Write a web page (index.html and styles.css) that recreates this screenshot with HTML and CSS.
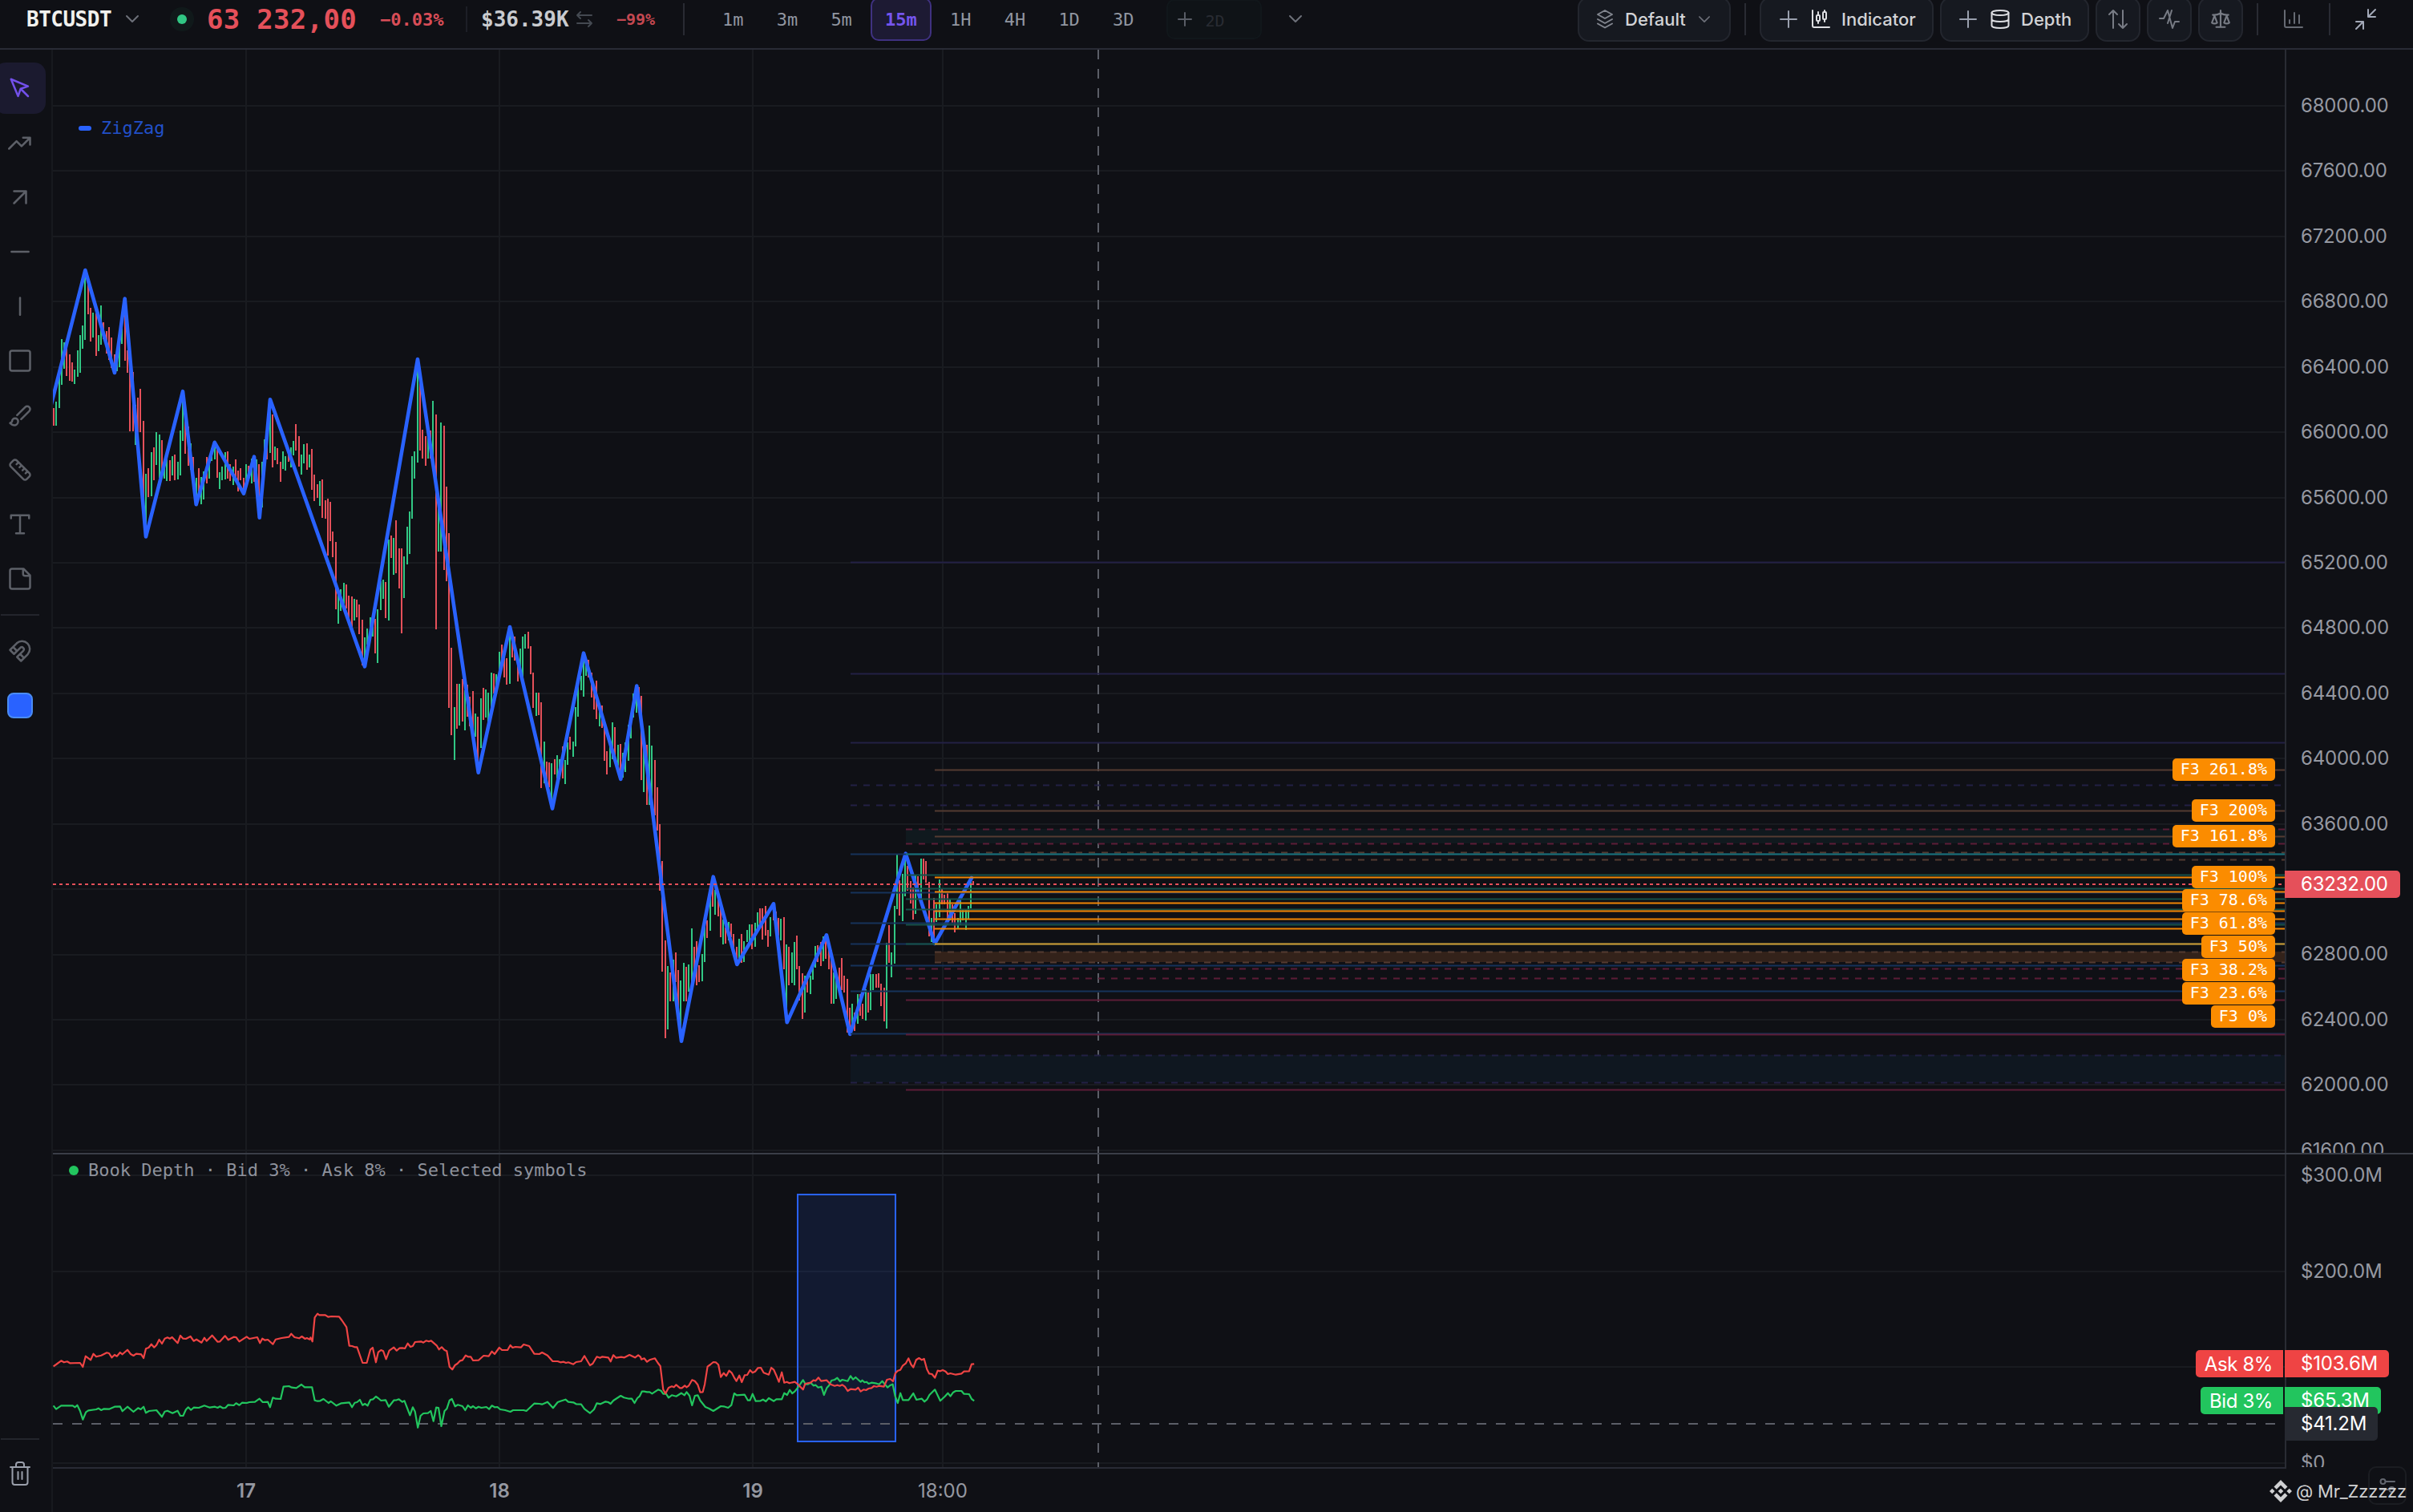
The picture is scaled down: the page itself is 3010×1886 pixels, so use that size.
FILE: index.html
```html
<!DOCTYPE html>
<html lang="en">
  <head>
    <meta charset="UTF-8" />
    <meta name="viewport" content="width=device-width, initial-scale=1.0" />
    <title>BTCUSDT</title>
    <link rel="stylesheet" href="styles.css">
  </head>
  <body>
    <header class="topbar">
      <div class="symbol">BTCUSDT</div>
      <svg class="icon chevron symbol-chevron" viewBox="0 0 16 10"><path d="M1 1l7 7 7-7" /></svg>
      <span class="live-dot"></span>
      <span class="price">63 232,00</span>
      <span class="change">−0.03%</span>
      <span class="divider short"></span>
      <span class="volume">$36.39K</span>
      <svg class="icon swap" viewBox="0 0 20 20"><path d="M19 5H1M5 1L1 5l4 4M1 15h18M15 11l4 4-4 4" /></svg>
      <span class="volume-change">−99%</span>
      <span class="divider"></span>

      <nav class="timeframes">
        <button class="tf">1m</button>
        <button class="tf">3m</button>
        <button class="tf">5m</button>
        <button class="tf active">15m</button>
        <button class="tf">1H</button>
        <button class="tf">4H</button>
        <button class="tf">1D</button>
        <button class="tf">3D</button>
      </nav>
      <div class="tf-add">
        <svg class="icon" viewBox="0 0 16 16"><path d="M8 0v16M0 8h16" /></svg>
        <span>2D</span>
      </div>
      <svg class="icon chevron tf-more" viewBox="0 0 16 10"><path d="M1 1l7 7 7-7" /></svg>

      <div class="actions">
        <button class="action layout">
          <svg class="icon" viewBox="0 0 24 24"><path d="M12 1l9 5-9 5-9-5z M3 12l9 5 9-5M3 17.500l9 5 9-5" /></svg>
          <span>Default</span>
          <svg class="icon chevron" viewBox="0 0 16 10"><path d="M1 1l7 7 7-7" /></svg>
        </button>
        <span class="divider"></span>
        <button class="action indicator">
          <svg class="icon plus" viewBox="0 0 20 20"><path d="M10 0v20M0 10h20" /></svg>
          <svg class="icon bright" viewBox="0 0 24 24"><path d="M2 1v19a2 2 0 0 0 2 2h19M9 3v4M9 14v3M17 1v2M17 12v3" /><rect x="7" y="7" width="4" height="7" rx="1" /><rect x="15" y="3" width="4" height="9" rx="1" /></svg>
          <span>Indicator</span>
        </button>
        <button class="action depth">
          <svg class="icon plus" viewBox="0 0 20 20"><path d="M10 0v20M0 10h20" /></svg>
          <svg class="icon bright" viewBox="0 0 24 24"><ellipse cx="12" cy="4" rx="10.500" ry="3" /><path d="M1.500 4v16c0 1.700 4.700 3 10.500 3s10.500-1.300 10.500-3V4M1.500 12c0 1.700 4.700 3 10.500 3s10.500-1.300 10.500-3" /></svg>
          <span>Depth</span>
        </button>
        <button class="action square"><svg class="icon" viewBox="0 0 26 26"><path d="M7 24V2M2 7l5-5 5 5M19 2v22M14 19l5 5 5-5" /></svg></button>
        <button class="action square"><svg class="icon" viewBox="0 0 26 26"><path d="M1 12h5l5-10 6 22 3-8h5M16 2l-5 16" /></svg></button>
        <button class="action square"><svg class="icon" viewBox="0 0 24 24"><path d="M16 16l3-8 3 8c-.87.65-1.920 1-3 1s-2.130-.35-3-1ZM2 16l3-8 3 8c-.87.65-1.920 1-3 1s-2.130-.35-3-1ZM7 21h10M12 2v19M3 7h2c2 0 5-1 7-2 2 1 5 2 7 2h2" /></svg></button>
        <span class="divider"></span>
        <svg class="icon bars" viewBox="0 0 24 24"><path d="M1 1v19a2 2 0 0 0 2 2h20M7 17v-4M13 17V4M19 17V7" /></svg>
        <span class="divider"></span>
        <svg class="icon collapse" viewBox="0 0 26 26"><path d="M1 16h9v9M25 10h-9V1M16 10l9-9M1 25l9-9" /></svg>
      </div>
    </header>

    <main class="workspace">
      <aside class="tools">
        <button class="tool active"><svg class="icon" viewBox="0 0 24 24"><path d="M3 3l7.070 16.970 2.510-7.390 7.390-2.510L3 3zM13 13l7 7" /></svg></button>
        <button class="tool"><svg class="icon" viewBox="0 0 24 24"><path d="M22 7l-8.500 8.500-5-5L1 18M15 7h7v7" /></svg></button>
        <button class="tool"><svg class="icon" viewBox="0 0 24 24"><path d="M6 18L18 6M6 6h12v12" /></svg></button>
        <button class="tool"><svg class="icon" viewBox="0 0 24 24"><path d="M3.500 12h17" /></svg></button>
        <button class="tool"><svg class="icon" viewBox="0 0 24 24"><path d="M12 3.500v17" /></svg></button>
        <button class="tool"><svg class="icon" viewBox="0 0 24 24"><rect x="2" y="2" width="20" height="20" rx="2" /></svg></button>
        <button class="tool"><svg class="icon" viewBox="0 0 24 24"><path d="M9.060 11.900l8.070-8.060a2.850 2.850 0 1 1 4.030 4.030l-8.060 8.080M7.070 14.940c-1.660 0-3 1.350-3 3.020 0 1.330-2.500 1.520-2 2.020 1.080 1.100 2.490 2.020 4 2.020 2.200 0 4-1.800 4-4.040a3.010 3.010 0 0 0-3-3.020z" /></svg></button>
        <button class="tool"><svg class="icon" viewBox="0 0 24 24"><path d="M21.300 15.300a2.400 2.400 0 0 1 0 3.400l-2.600 2.600a2.400 2.400 0 0 1-3.400 0L2.700 8.700a2.410 2.410 0 0 1 0-3.400l2.600-2.600a2.410 2.410 0 0 1 3.400 0ZM14.500 12.500l2-2M11.500 9.500l2-2M8.500 6.500l2-2M17.500 15.500l2-2" /></svg></button>
        <button class="tool"><svg class="icon" viewBox="0 0 24 24"><path d="M3 6V3h18v3M8 21h8M12 3v18" /></svg></button>
        <button class="tool"><svg class="icon" viewBox="0 0 24 24"><path d="M15.500 2H4a2 2 0 0 0-2 2v16a2 2 0 0 0 2 2h16a2 2 0 0 0 2-2V8.500ZM15 2v5a2 2 0 0 0 2 2h5" /></svg></button>
        <hr class="tool-rule">
        <button class="tool"><svg class="icon" viewBox="0 0 24 24"><path d="M6 15l-4-4 6.750-6.770a7.790 7.790 0 0 1 11 11L13 22l-4-4 6.390-6.360a2.140 2.140 0 0 0-3-3L6 15M5 8l4 4M12 15l4 4" /></svg></button>
        <button class="tool"><span class="swatch"></span></button>
        <div class="tools-bottom">
          <hr class="tool-rule">
          <button class="tool trash"><svg class="icon" viewBox="0 0 26 30"><path d="M1 7h24M3.500 7v19a3 3 0 0 0 3 3h13a3 3 0 0 0 3-3V7M8 7V4a3 3 0 0 1 3-3h4a3 3 0 0 1 3 3v3M10.500 13v9M15.500 13v9" /></svg></button>
        </div>
      </aside>

      <section class="charts">
        <div class="pane price-pane">
          <div class="plot">
            <svg id="price-chart" viewBox="66 62 2784 1376"></svg>
            <div class="legend zigzag"><i></i>ZigZag</div>
            <div id="fib-tags"></div>
          </div>
          <div class="axis">
            <div class="scale price-scale">
              <span>68000.00</span>
              <span>67600.00</span>
              <span>67200.00</span>
              <span>66800.00</span>
              <span>66400.00</span>
              <span>66000.00</span>
              <span>65600.00</span>
              <span>65200.00</span>
              <span>64800.00</span>
              <span>64400.00</span>
              <span>64000.00</span>
              <span>63600.00</span>
              <span></span>
              <span>62800.00</span>
              <span>62400.00</span>
              <span>62000.00</span>
              <span>61600.00</span>
            </div>
            <div class="axis-tag last-price">63232.00</div>
          </div>
        </div>

        <div class="pane depth-pane">
          <div class="plot">
            <svg id="depth-chart" viewBox="66 1440 2784 390"></svg>
            <div class="legend book"><i></i>Book Depth · Bid 3% · Ask 8% · Selected symbols</div>
            <div class="series-tag ask">Ask 8%</div>
            <div class="series-tag bid">Bid 3%</div>
          </div>
          <div class="axis">
            <div class="scale depth-scale">
              <span>$300.0M</span>
              <span>$200.0M</span>
              <span></span>
              <span>$0</span>
            </div>
            <div class="axis-tag ask">$103.6M</div>
            <div class="axis-tag bid">$65.3M</div>
            <div class="axis-tag cursor">$41.2M</div>
          </div>
        </div>

        <footer class="time-axis">
          <b class="day">17</b>
          <b class="day">18</b>
          <b class="day">19</b>
          <span class="hour">18:00</span>
        </footer>
        <button class="settings"><svg class="icon" viewBox="0 0 18 18"><circle cx="3.500" cy="4" r="3" /><path d="M7 4h11M0 14h11" /><circle cx="14.500" cy="14" r="3" /></svg></button>
        <div class="watermark">
          <svg viewBox="0 0 28 28"><path d="M14 0l8.500 8.500-3.300 3.300L14 6.600l-5.200 5.200-3.300-3.300zM14 28l8.500-8.500-3.300-3.300L14 21.400l-5.200-5.200-3.300 3.300zM14 10.700l3.300 3.300-3.300 3.300-3.300-3.300zM3.300 10.700L6.600 14l-3.300 3.300L0 14zM24.700 10.700L28 14l-3.300 3.300-3.300-3.300z" /></svg>
          <span>@ Mr_Zzzzzz</span>
        </div>
      </section>
    </main>

    <script src="chart.js"></script>
  </body>
</html>
```

FILE: styles.css
```css
* {
  box-sizing: border-box;
}
body {
  margin: 0;
  width: 3010px;
  height: 1886px;
  overflow: hidden;
  display: flex;
  flex-direction: column;
  background-color: #0f1015;
  color: #9598a1;
  font-family: Inter, "Liberation Sans", sans-serif;
  font-size: 24px;
}
button {
  border: none;
  background: none;
  padding: 0;
  margin: 0;
  color: inherit;
  font: inherit;
}
.icon {
  fill: none;
  stroke: currentColor;
  stroke-width: 2;
  stroke-linecap: round;
  stroke-linejoin: round;
  overflow: visible;
  flex: none;
}
.chevron {
  width: 16px;
  height: 10px;
  color: #6d7079;
}

/* Top bar */
.topbar {
  flex: none;
  height: 62px;
  padding: 0 46px 12px 33px;
  border-bottom: 2px solid #292b35;
  display: flex;
  align-items: center;
  white-space: nowrap;
  font-family: "DejaVu Sans Mono", monospace;
}
.symbol {
  width: 108px;
  font-size: 26px;
  font-weight: 700;
  letter-spacing: -0.5px;
  color: #f1f1ee;
}
.symbol-chevron {
  margin-left: 16px;
}
.live-dot {
  width: 12px;
  height: 12px;
  margin-left: 48px;
  border-radius: 50%;
  background-color: #31c784;
  box-shadow: 0 0 0 9px rgba(49, 199, 132, 0.05);
}
.price {
  width: 188px;
  margin-left: 25px;
  font-size: 34px;
  font-weight: 700;
  letter-spacing: 0.3px;
  color: #e5505a;
}
.change {
  width: 80px;
  margin-left: 28px;
  font-size: 22px;
  font-weight: 700;
  color: #d84d57;
}
.divider {
  flex: none;
  width: 2px;
  height: 40px;
  background-color: #292b33;
}
.divider.short {
  height: 32px;
  margin-left: 27px;
  background-color: #1d1f26;
}
.volume {
  width: 110px;
  margin-left: 17px;
  font-size: 26px;
  font-weight: 700;
  color: #c9cbcf;
}
.swap {
  width: 20px;
  height: 20px;
  margin-left: 9px;
  color: #444951;
}
.volume-change {
  width: 48px;
  margin-left: 30px;
  font-size: 20px;
  font-weight: 700;
  color: #c44851;
}
.volume-change + .divider {
  margin-left: 35px;
}
.timeframes {
  display: flex;
  gap: 5.200px;
  margin-left: 29px;
}
.tf {
  height: 54px;
  padding: 0 16px;
  border: 2px solid transparent;
  border-radius: 10px;
  font-size: 22px;
  color: #9196a1;
}
.tf.active {
  border-color: #3f3180;
  background-color: #1d1a33;
  color: #7555ee;
  font-weight: 700;
}
.tf-add {
  width: 119px;
  height: 50px;
  margin-left: 22px;
  padding-left: 13px;
  border: 2px solid #11171b;
  border-radius: 10px;
  background-color: #0f1317;
  display: flex;
  align-items: center;
  gap: 18px;
  font-size: 20px;
  color: #292c33;
}
.tf-add .icon {
  width: 16px;
  height: 16px;
  color: #595d66;
}
.tf-add span {
  padding-top: 3px;
}
.tf-more {
  margin-left: 34px;
}
.actions {
  margin-left: auto;
  display: flex;
  align-items: center;
  font: 500 22px Inter, sans-serif;
  color: #d2d3d6;
}
.action {
  height: 56px;
  border: 2px solid #23262e;
  border-radius: 14px;
  background-color: #161920;
  display: flex;
  align-items: center;
}
.action .icon {
  width: 24px;
  height: 24px;
  color: #82868f;
}
.action .plus {
  width: 20px;
  height: 20px;
  color: #9aa0ae;
}
.action .bright {
  color: #dddee2;
}
.action .chevron {
  width: 14px;
  height: 9px;
  color: #6d7079;
}
.layout {
  width: 191px;
  padding-left: 20px;
}
.layout span {
  width: 78px;
  margin: 0 14px 0 13px;
  text-align: left;
}
.actions > .divider {
  margin-left: 17px;
}
.indicator {
  width: 217px;
  margin-left: 17px;
  padding-left: 24px;
}
.depth {
  width: 186px;
  margin-left: 8px;
  padding-left: 23px;
}
.plus + .icon {
  margin: 0 14px 0 18px;
}
.square {
  width: 56px;
  margin-left: 8px;
  justify-content: center;
}
.square .icon {
  width: 26px;
  height: 26px;
  color: #777b84;
}
.bars {
  width: 24px;
  height: 24px;
  margin: 0 15px 0 32px;
  color: #666a73;
}
.collapse {
  width: 26px;
  height: 26px;
  margin-left: 31px;
  color: #a3a9b8;
}

/* Drawing tools */
.workspace {
  flex: 1;
  display: flex;
  min-height: 0;
}
.tools {
  flex: none;
  width: 66px;
  padding-top: 14px;
  border-right: 2px solid #17191e;
  display: flex;
  flex-direction: column;
}
.tool {
  flex: none;
  width: 64px;
  height: 64px;
  margin: 2px 0 2px -7px;
  border-radius: 14px;
  display: flex;
  align-items: center;
  justify-content: center;
  color: #5d6068;
}
.tool .icon {
  width: 30px;
  height: 30px;
}
.tool.active {
  background-color: #1b1a2f;
  color: #7350ea;
}
.tool-rule {
  width: 48px;
  height: 2px;
  margin: 10px 0 10px 1px;
  border: none;
  background-color: #23252c;
}
.swatch {
  width: 32px;
  height: 32px;
  border: 2px solid #4a8cf2;
  border-radius: 8px;
  background-color: #2962ff;
}
.tools-bottom {
  margin-top: auto;
  padding-bottom: 14px;
}
.trash {
  color: #9a9fab;
}
.trash .icon {
  width: 26px;
}

/* Panes */
.charts {
  position: relative;
  flex: 1;
  display: flex;
  flex-direction: column;
}
.pane {
  display: grid;
  grid-template-columns: 2784px 160px;
}
.price-pane {
  height: 1378px;
  border-bottom: 2px solid #3a3e48;
}
.depth-pane {
  height: 392px;
}
.depth-pane .plot {
  border-bottom: 2px solid #292b35;
}
.plot,
.axis {
  position: relative;
}
.plot svg {
  display: block;
  width: 2784px;
}
.axis {
  border-left: 2px solid #292b33;
  min-height: 0;
  letter-spacing: -0.2px;
}
.scale {
  height: 100%;
  overflow: hidden;
  padding-left: 18px;
}
.scale span {
  display: block;
}
.price-scale {
  padding-top: 29px;
}
.price-scale span {
  height: 81.430px;
  line-height: 81.430px;
}
.depth-scale {
  height: 390px;
}
.depth-scale span {
  height: 119.670px;
  line-height: 119.670px;
}
.depth-scale span:first-child {
  margin-top: -34px;
}
.axis-tag,
.series-tag {
  position: absolute;
  height: 34px;
  line-height: 34px;
  color: #fff;
}
.axis-tag {
  left: -2px;
  padding-left: 20px;
  border-radius: 0 5px 5px 0;
}
.series-tag {
  right: 2px;
  padding: 1px 13px 0 11px;
  border-radius: 5px 0 0 5px;
  letter-spacing: -0.4px;
}
.last-price {
  top: 1024px;
  width: 144px;
  background-color: #e5505a;
}
.ask {
  top: 244px;
  background-color: #ef4444;
}
.bid {
  top: 290px;
  background-color: #22c55e;
}
.axis-tag.ask {
  width: 130px;
}
.axis-tag.bid {
  width: 120px;
}
.axis-tag.cursor {
  top: 315px;
  width: 116px;
  height: 42px;
  line-height: 42px;
  background-color: #262931;
}
.legend {
  position: absolute;
  display: flex;
  align-items: center;
  font-family: "DejaVu Sans Mono", monospace;
  font-size: 22px;
  line-height: 26px;
  white-space: pre;
}
.zigzag {
  left: 32px;
  top: 85px;
  gap: 12px;
  color: #2250c8;
}
.zigzag i {
  width: 16px;
  height: 6px;
  border-radius: 3px;
  background-color: #2962ff;
}
.book {
  left: 20px;
  top: 7px;
  gap: 12px;
  color: #8e929c;
}
.book i {
  width: 12px;
  height: 12px;
  border-radius: 50%;
  background-color: #22c55e;
}
.fib-tag {
  position: absolute;
  right: 12px;
  height: 28px;
  padding: 0 10px;
  border-radius: 5px;
  background-color: #fb8c00;
  color: #fff;
  font: 20px/27px "DejaVu Sans Mono", monospace;
  white-space: pre;
}
.time-axis {
  display: flex;
  align-items: center;
  height: 54px;
  padding-left: 83px;
}
.day {
  width: 316px;
  text-align: center;
  font-weight: 600;
}
.hour {
  width: 160px;
  margin-left: -1px;
  text-align: center;
}
.settings {
  position: absolute;
  right: 8px;
  bottom: 9px;
  width: 48px;
  height: 48px;
  border: 2px solid #1b1d22;
  border-radius: 10px;
  display: flex;
  align-items: center;
  justify-content: center;
  color: #62666f;
}
.settings .icon {
  width: 18px;
  height: 18px;
}
.watermark {
  position: absolute;
  right: 8px;
  bottom: 12px;
  display: flex;
  align-items: center;
  gap: 5px;
  font-size: 22px;
  letter-spacing: -0.2px;
  color: #cfd0d2;
}
.watermark svg {
  width: 28px;
  height: 28px;
  fill: currentColor;
}

/* Chart strokes */
.grid {
  stroke: #191b20;
  stroke-width: 2;
}
.crosshair {
  stroke: #5b5e67;
  stroke-width: 2;
  stroke-dasharray: 12 12;
}
.up {
  fill: #31c784;
}
.down {
  fill: #e5505a;
}
.zigzag-line {
  fill: none;
  stroke: #2962ff;
  stroke-width: 4.600;
  stroke-linejoin: round;
  stroke-linecap: round;
}
.last-line {
  stroke: #e5505a;
  stroke-width: 2;
  stroke-dasharray: 4 4;
}
.fib {
  stroke-width: 2;
}
.fib.dashed {
  stroke-dasharray: 8 8;
}
.purple {
  stroke: #232045;
}
.blue {
  stroke: #16325a;
}
.maroon {
  stroke: #5c1c37;
}
.teal {
  stroke: #165049;
}
.cyan {
  stroke: #187176;
}
.brown {
  stroke: #543b31;
}
.orange {
  stroke: #ef8405;
}
.gold {
  stroke: #d1962a;
}
.ask-line,
.bid-line {
  fill: none;
  stroke-width: 2.200;
  stroke-linejoin: round;
}
.ask-line {
  stroke: #ef4444;
}
.bid-line {
  stroke: #22c55e;
}
.selection {
  fill: rgba(41, 98, 255, 0.12);
  stroke: #2962ff;
  stroke-width: 2;
}
```

FILE: chart.js
```js
const NS = "http://www.w3.org/2000/svg";
const priceChart = document.getElementById("price-chart");
const depthChart = document.getElementById("depth-chart");

function draw(svg, tag, cls, attrs) {
  const el = document.createElementNS(NS, tag);
  el.setAttribute("class", cls);
  for (const key in attrs) el.setAttribute(key, attrs[key]);
  svg.appendChild(el);
}

function line(svg, cls, x1, y1, x2, y2) {
  draw(svg, "line", cls, { x1, y1, x2, y2 });
}

// Grid
for (let i = 0; i < 17; i++) {
  const y = Math.round(132 + i * 81.43);
  line(priceChart, "grid", 66, y, 2850, y);
}
[1466, 1586, 1705, 1825].forEach((y) => line(depthChart, "grid", 66, y, 2850, y));
[307, 623, 939, 1176].forEach((x) => {
  line(priceChart, "grid", x, 62, x, 1438);
  line(depthChart, "grid", x, 1440, x, 1830);
});

line(priceChart, "crosshair", 1370, 62, 1370, 1438);

// 15m bars: direction, high, low. Each block has its own origin and scale.
const blocks = [
  {
    top: 300,
    scale: 2.8,
    bars: `d585,647 u563,647 u473,585 u344,504 u356,448 d370,473 d398,490 d426,493 u451,501 u384,476
      u330,462 u297,378 u110,347 d135,258 d235,353 u252,339 d255,403 u330,386 u227,364 d286,344
      d316,395 d302,417 d339,445 d398,460 u420,456 u360,442 u300,361 d205,420 d384,462 d420,666
      d460,666 u574,714 d549,668 d518,669 d630,960 u815,1030 d795,896 u739,893 d722,837 u669,784
      u678,830 d697,815 u780,829 u765,840 d767,840 u753,820 d748,837 u773,834 u664,820 u530,700
      d580,745 d650,787 u708,800 d756,868 u829,920 d795,890 u826,921 u806,904 d756,848 u760,832
      u725,770 u710,764 d718,829 u809,868 u790,837 u739,834 d736,832 d780,840 u790,854 d764,835
      d804,876 d795,837 d829,885 u781,845 d787,830 u762,848 d755,843 u764,850 d781,965 u773,932
      u694,808 d640,764 u560,742 d608,792 u720,767 d725,781 d773,843 u736,798 u753,804 d740,773
      u722,792 u700,750 d641,734 d683,790 u748,818 u711,778 d708,801 u748,792 d728,871 d818,910
      d851,899 u840,927 d834,969 d907,972 d902,1100 d913,1050 d1016,1106 d1053,1288 u1235,1338 u1218,1294
      u1196,1270 d1201,1285 d1240,1335 d1243,1350 u1252,1327 d1254,1316 d1271,1375 d1324,1484 u1386,1485 u1355,1410
      u1316,1365 u1330,1383 d1322,1442 u1288,1476 u1190,1291 u1184,1252 d1193,1319 u1044,1327 d1030,1109 u1039,1168
      d977,1162 d1075,1215 d1075,1372 u1103,1249 u1000,1131 u946,1095 u753,972 u736,832 u415,776 d480,734
      d661,762 d683,787 u690,764 d664,762 u560,770 d608,1358 u920,1086 u636,1086 d647,1150 d860,1190`,
  },
  {
    top: 420,
    scale: 2.45,
    bars: `d600,1134 d951,1218 u1132,1294 d1061,1198 u1061,1188 d1046,1176 u1080,1203 d1063,1161 d1100,1190 d1083,1215
      u1151,1223 d1161,1325 u1105,1257 d1073,1171 u1078,1164 u1088,1180 u1027,1140 d1029,1090 u1031,1093 u963,1040
      d941,1010 d975,1041 d982,1063 u890,1061 d915,980 d916,990 d985,1053 u953,1030 u916,1050 u909,953
      d902,953 d946,1031 d1027,1134 u1088,1159 d1088,1156 d1117,1379 u1237,1365 d1298,1370 d1301,1377 u1303,1440
      d1291,1338 u1279,1350 u1291,1352 d1252,1350 u1294,1367 u1240,1308 d1223,1262 u1237,1284 u1132,1252 u1063,1161
      u1036,1080 u970,1100 u995,1036 d987,1040 d1027,1102 d1075,1139 d1051,1169 u1130,1191 d1127,1196 d1190,1296
      d1267,1338 u1240,1316 u1178,1291 d1193,1290 u1247,1310 d1245,1350 u1272,1347 u1240,1330 u1186,1296 u1165,1227
      u1090,1164 u1070,1149 d1071,1150 d1098,1355 u1210,1392 d1247,1431 u1188,1431 u1249,1409`,
  },
  {
    top: 880,
    scale: 3,
    bars: `d204,410 d306,468 d444,693 d582,996 d879,1245 u975,1212 d1000,1107 u951,1107 d924,1035 d990,1150
      u1029,1240 u963,1107 d978,1107 u969,1071 u834,1040 d903,990 d882,1047 d972,1035 u930,1032 u800,960
      d804,870 u700,843 d650,753 u690,783 d700,789 d760,867 u800,894 d830,891 u810,880 d816,867
      d855,930 d903,965 u873,950 d855,963 u882,960 u840,885 u819,900 d819,912 u813,903 u774,840
      d759,830 d759,876 d750,861 d840,903 u792,864 d745,804 d771,850 d795,860 u798,879 d792,987
      u894,1180 d903,1047 u924,1038 u885,1047 d861,987 d975,1104 d1002,1173 u1011,1149 d1010,1074 u1011,1080
      u960,1026 u900,981 d897,960 d885,975 u864,957 d860,948 d880,987 d915,1116 u1000,1116 u1020,1098
      d981,1050 d945,1065 d1011,1074 d1023,1224 d1131,1225 u1116,1190 d1150,1218 u1080,1191 d1080,1161 d1116,1173
      u1062,1179 d1074,1149 u1005,1140 u1005,1065 d1005,1056 d1002,1056 d1041,1125 d1056,1182 u888,1209 d822,963
      u924,1017 u750,966 u558,762 d654,786 u630,807 u555,714 d600,693 d657,741 d681,801 u636,780
      d639,700 u573,727 d573,651 d582,663 d660,864 u795,885 d720,885 u744,810 u651,792 d687,744
      d708,744 d699,818 u726,803 d744,813 d777,849 u795,834 u723,822 u762,804 u762,840 u750,798
      u645,759 d657,672`,
  },
];

let index = 0;
blocks.forEach(({ top, scale, bars }) => {
  bars.trim().split(/\s+/).forEach((bar) => {
    const [high, low] = bar.slice(1).split(",").map((v) => top + v / scale);
    draw(priceChart, "rect", bar[0] === "u" ? "up" : "down", {
      x: Math.round(67 + index * 3.2877) - 1,
      y: Math.round(high),
      width: 2,
      height: Math.round(low - high),
    });
    index++;
  });
});

draw(priceChart, "polyline", "zigzag-line", {
  points: `63,508 106.3,337 143,465 155.7,372.500 182,669.500 228,488.200 244.700,629.300 267.700,551.800
    304,615.700 317,569.600 323.700,645.700 337,498.200 455,831.400 521,448 596.700,963.700 636,782 689,1008.600
    728,814.700 774.300,971.800 794.300,855.500 850,1298.700 889.700,1093.700 919.300,1203 965,1127.300
    981.700,1275.300 1031,1166.300 1060.300,1290 1129.700,1064.700 1166,1177 1212,1095`,
});

// Fibonacci zones and levels
draw(priceChart, "rect", "", { x: 1061, y: 1316, width: 1789, height: 34, fill: "#0f1720" });
draw(priceChart, "rect", "", { x: 1130, y: 1034, width: 1720, height: 18, fill: "#10191e" });
draw(priceChart, "rect", "", { x: 1166, y: 1187, width: 1684, height: 13, fill: "#33221a" });

const levels = [
  ["purple", 1061, [701.5, 840.5, 926.5]],
  ["purple dashed", 1061, [979.5, 1004.5, 1316.5, 1350.5]],
  ["blue", 1061, [1065.5, 1113.5, 1151.5, 1177.5, 1204.5, 1236.5, 1289.5]],
  ["maroon", 1130, [1247.5, 1290.5, 1359.5]],
  ["maroon dashed", 1130, [1034.5, 1052.5, 1208.5, 1220.5]],
  ["teal", 1130, [1091.5, 1108.5, 1121.5, 1134.5, 1153.5, 1177.5]],
  ["brown dashed", 1166, [1063.5, 1072.5, 1187.5, 1200.5]],
  ["cyan", 1130, [1065.5]],
  ["brown", 1166, [960.5, 1011.5, 1043.5]],
  ["orange", 1166, [1094.5, 1112.5, 1126.5, 1136.5, 1146.5, 1158.5]],
  ["gold", 1166, [1177.5]],
];
levels.forEach(([cls, x, ys]) => ys.forEach((y) => line(priceChart, "fib " + cls, x, y, 2850, y)));

line(priceChart, "last-line", 66, 1103, 2850, 1103);

const fibTags = [
  ["261.8%", 946],
  ["200%", 997],
  ["161.8%", 1029],
  ["100%", 1080],
  ["78.6%", 1109],
  ["61.8%", 1138],
  ["50%", 1167],
  ["38.2%", 1196],
  ["23.6%", 1225],
  ["0%", 1254],
];
fibTags.forEach(([label, y]) => {
  const tag = document.createElement("div");
  tag.className = "fib-tag";
  tag.style.top = y - 62 + "px";
  tag.textContent = "F3 " + label;
  document.getElementById("fib-tags").appendChild(tag);
});

// Book depth: the left part is sampled on a tighter x scale than the right one
function series(left, right) {
  const map = (text, x0, kx) =>
    text.trim().split(/\s+/).map((p) => {
      const [x, y] = p.split(",");
      return (x0 + x / kx).toFixed(1) + "," + (1420 + y / 3).toFixed(1);
    });
  return map(left, 0, 1.7422).concat(map(right, 800, 2.529)).join(" ");
}

const bid = series(
  `116,1000 122,1013 133,1000 158,1000 163,1006 168,998 174,1020 180,1052 187,1024 192,1018 209,1014 214,1010
   220,1017 226,1012 237,1013 249,1004 261,1003 266,1021 277,1004 290,1023 300,1009 306,1014 312,1004 317,1027
   324,1020 340,1017 352,1042 358,1022 364,1019 375,1028 386,1019 392,1038 398,1038 404,1015 409,1006 415,1016
   421,1007 432,1008 444,1000 456,1007 467,1004 473,1008 478,1003 484,1009 490,1008 496,997 508,999 513,991
   520,998 526,989 536,990 542,987 554,986 564,974 571,987 582,986 587,1006 593,970 599,974 610,975 616,929
   628,927 634,932 644,934 655,921 662,931 678,931 684,980 690,983 696,982 703,975 714,990 719,984 731,1000
   742,991 759,988 765,1006 771,989 776,987 782,978 788,998 793,993 799,1000 805,978 811,976 817,966 822,972
   828,981 838,979 845,1004 856,980 862,979 867,976 874,986 879,982 891,1036 897,1006 902,1022 908,1082 914,1038
   920,1029 930,1028 936,1020 942,1058 948,1007 953,1008 959,1077 966,1020 971,1012 977,980 982,975 989,1003
   995,997 1005,1002 1011,1017 1017,999 1023,1008 1028,1002 1034,1010 1040,1004 1046,1008 1057,1005 1063,1013
   1069,1000 1075,1006 1081,1005 1087,1014 1098,1017 1109,1023 1115,1017 1138,1017 1144,1020 1161,992 1172,993
   1178,995 1190,986 1202,1009 1212,987 1218,983 1229,977 1235,986 1246,988 1252,994 1263,995 1270,1012 1282,1028
   1291,1014 1297,991 1305,994 1316,985 1322,987 1327,993 1333,981 1349,963 1356,970 1367,974 1373,974 1379,990
   1385,972 1390,965 1395,947`,
  `9,947 18,949 26,949 34,955 53,940 62,944 69,956 78,955 86,970 96,961 110,965 126,953 136,961 143,949
   152,963 160,999 169,963 178,961 186,981 202,1005 214,1011 227,1020 243,1008 251,1002 260,1003 274,1008
   284,998 293,954 301,961 326,959 336,980 343,980 351,956 361,983 376,982 384,977 393,984 402,972 418,983
   426,976 443,976 451,953 460,960 468,941 476,954 484,947 492,935 501,920 510,904 518,920 525,920 534,914
   543,925 550,923 558,932 568,929 576,960 585,934 592,925 600,906 610,903 618,896 627,909 634,903 651,908
   660,889 668,902 676,894 692,911 697,905 704,913 711,911 717,918 726,914 742,917 750,920 760,908 769,921
   777,932 785,924 793,920 801,965 809,990 817,953 825,979 843,979 858,954 868,978 885,974 893,985 901,977
   909,960 926,940 943,982 958,965 967,953 975,965 984,950 992,945 1010,945 1018,956 1034,957 1042,975 1050,982`
);

const ask = series(
  `116,853 122,846 133,832 139,838 146,835 152,841 174,840 180,855 186,815 197,829 203,806 209,817 220,812
   232,802 237,804 243,820 249,810 254,815 261,801 266,808 277,791 284,807 290,813 296,806 307,808 312,822
   317,787 323,783 329,770 335,782 340,773 346,753 352,768 358,749 364,745 369,749 374,744 386,766 392,738
   398,749 404,750 414,741 421,758 427,752 438,764 444,746 449,758 461,737 473,761 478,760 489,739 496,754
   508,743 513,744 520,760 536,742 542,750 559,744 565,766 570,749 576,755 582,753 593,770 599,752 612,747
   628,743 633,731 640,744 650,748 656,741 663,750 667,747 673,752 675,745 679,760 684,670 690,656 694,661
   707,661 713,668 720,666 737,667 743,681 753,706 759,776 765,777 771,781 776,781 788,840 797,840 805,790
   810,783 817,838 822,800 828,792 833,796 839,826 846,794 856,782 862,794 868,785 874,784 880,786 886,767
   892,780 897,777 902,762 915,760 920,764 926,757 932,760 937,757 949,775 954,790 960,781 966,792 971,796
   977,855 983,865 989,848 994,843 1000,832 1005,830 1012,812 1017,817 1023,817 1028,831 1040,830 1051,813
   1062,815 1069,797 1075,807 1085,783 1091,792 1103,792 1109,774 1114,783 1120,780 1132,782 1138,771 1150,777
   1161,806 1172,807 1178,801 1190,812 1201,834 1212,834 1218,838 1225,836 1230,840 1235,838 1246,845 1252,837
   1263,834 1270,814 1282,849 1288,843 1297,817 1304,821 1309,817 1322,820 1327,835 1333,811 1339,821 1350,818
   1357,820 1368,810 1380,820 1387,811 1392,818`,
  `0,827 9,823 18,836 26,829 43,823 52,840 60,852 69,940 76,955 86,933 96,928 103,931 110,922 122,934 128,934
   137,925 143,931 150,925 160,904 169,908 178,922 186,950 194,949 200,920 209,854 218,846 227,837 235,838
   243,847 251,893 260,878 268,889 277,869 285,877 293,895 300,908 309,887 317,912 326,886 334,885 343,867
   351,877 359,872 368,859 377,858 386,877 402,884 410,858 418,866 426,887 434,911 443,875 451,914 459,911
   467,916 477,913 484,911 494,920 510,940 517,918 534,914 543,905 550,907 559,895 567,908 585,905 597,920
   610,926 618,923 626,926 634,922 642,929 651,945 660,938 676,940 684,933 692,947 701,940 709,942 717,936
   726,934 734,927 742,929 750,926 765,929 775,903 785,900 794,909 801,880 808,870 817,866 825,850 834,842
   843,823 851,846 858,857 867,829 876,822 885,829 892,825 901,864 908,880 917,882 926,896 935,869 943,871
   951,867 960,872 967,882 975,879 992,884 1010,880 1018,872 1034,871 1042,845 1050,844`
);

draw(depthChart, "rect", "selection", { x: 995, y: 1490, width: 122, height: 308 });
line(depthChart, "crosshair", 66, 1776, 2850, 1776);
line(depthChart, "crosshair", 1370, 1440, 1370, 1830);
draw(depthChart, "polyline", "bid-line", { points: bid });
draw(depthChart, "polyline", "ask-line", { points: ask });
```
